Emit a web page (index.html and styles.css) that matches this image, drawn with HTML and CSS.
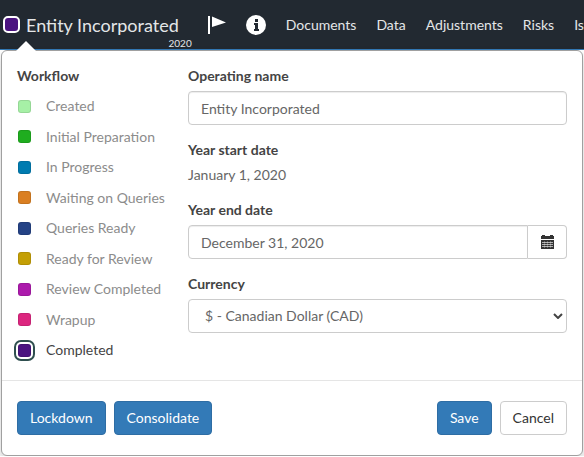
FILE: index.html
```html
<!DOCTYPE html>
<html lang="en">
<head>
<meta charset="utf-8">
<title>Entity Incorporated</title>
<link rel="stylesheet" href="styles.css">
</head>
<body>
<header class="topbar">
  <button class="entity" type="button">
    <span class="entity-swatch completed"></span>
    <span class="entity-name">Entity Incorporated</span>
    <span class="entity-year">2020</span>
  </button>
  <button class="icon-button flag" type="button" aria-label="Flag">
    <svg width="18" height="18" viewBox="0 0 18 18" fill="#fff"><path d="M0 0h2v18H0zM4 0.500L18 6.500L4 11z"/></svg>
  </button>
  <button class="icon-button info" type="button" aria-label="Information">
    <svg width="20" height="20" viewBox="0 0 20 20"><circle cx="10" cy="10" r="10" fill="#fff"/><path fill="#222931" d="M9 4h3v3H9zM8 8h4v6h1v2H8v-2h1v-4H8z"/></svg>
  </button>
  <nav class="nav">
    <a href="#">Documents</a>
    <a href="#">Data</a>
    <a href="#">Adjustments</a>
    <a href="#">Risks</a>
    <a href="#">Issues</a>
  </nav>
</header>
<form class="popover">
  <div class="popover-body">
    <section class="workflow">
      <h2 class="heading">Workflow</h2>
      <ul class="states">
        <li><button class="state" type="button"><span class="swatch created"></span>Created</button></li>
        <li><button class="state" type="button"><span class="swatch initial"></span>Initial Preparation</button></li>
        <li><button class="state" type="button"><span class="swatch progress"></span>In Progress</button></li>
        <li><button class="state" type="button"><span class="swatch waiting"></span>Waiting on Queries</button></li>
        <li><button class="state" type="button"><span class="swatch queries"></span>Queries Ready</button></li>
        <li><button class="state" type="button"><span class="swatch ready"></span>Ready for Review</button></li>
        <li><button class="state" type="button"><span class="swatch reviewed"></span>Review Completed</button></li>
        <li><button class="state" type="button"><span class="swatch wrapup"></span>Wrapup</button></li>
        <li><button class="state selected" type="button" aria-pressed="true"><span class="swatch completed"></span>Completed</button></li>
      </ul>
    </section>
    <div class="fields">
      <div class="field">
        <label class="heading" for="name">Operating name</label>
        <input class="control" id="name" type="text" value="Entity Incorporated">
      </div>
      <div class="field">
        <span class="heading">Year start date</span>
        <span class="value">January 1, 2020</span>
      </div>
      <div class="field">
        <label class="heading" for="end">Year end date</label>
        <div class="input-group">
          <input class="control" id="end" type="text" value="December 31, 2020">
          <button class="addon" type="button" aria-label="Choose date">
            <svg width="13" height="14" viewBox="0 0 13 14"><path fill="#333" d="M0 1h1V0h3v1h5V0h3v1h1v3H0zM0 5h13v9H0z"/><path stroke="#fff" stroke-opacity=".6" d="M1 7.500h11M1 9.500h11M1 11.500h11"/><path stroke="#fff" stroke-opacity=".25" d="M3.500 6v7M6.500 6v7M9.500 6v7"/></svg>
          </button>
        </div>
      </div>
      <div class="field">
        <label class="heading" for="currency">Currency</label>
        <div class="select-wrap">
          <select class="control" id="currency"><option>$ - Canadian Dollar (CAD)</option></select>
          <svg class="chevron" width="10" height="6" viewBox="0 0 10 6"><path fill="none" stroke="#444" stroke-width="2" d="M1 1l4 4l4-4"/></svg>
        </div>
      </div>
    </div>
  </div>
  <footer class="actions">
    <button class="btn primary" type="button">Lockdown</button>
    <button class="btn primary" type="button">Consolidate</button>
    <button class="btn primary save" type="submit">Save</button>
    <button class="btn" type="button">Cancel</button>
  </footer>
</form>
</body>
</html>
```
FILE: styles.css
```css
* { box-sizing: border-box; }
body {
  margin: 0;
  font: 14px/20px Lato, "Liberation Sans", sans-serif;
  color: #333;
  background: #fff;
}
button, input, select { font: inherit; color: inherit; }
button { padding: 0; border: 0; background: none; cursor: pointer; }

.topbar {
  display: flex;
  align-items: center;
  height: 50px;
  padding-left: 3px;
  background: #222931;
  border-bottom: 1px solid #337ab7;
  color: #e4e6e8;
}
.entity { position: relative; display: flex; align-items: center; gap: 6px; flex: none; }
.entity-swatch { width: 17px; height: 17px; border: 2px solid #fff; border-radius: 5px; }
.entity-name { font-size: 18px; line-height: 24px; white-space: nowrap; }
.entity-year { position: absolute; right: -13px; top: 24px; font-size: 10px; line-height: 12px; }
.icon-button { display: flex; flex: none; }
.flag { margin-left: 29px; }
.info { margin-left: 20px; }
.nav { display: flex; flex: 1; min-width: 0; overflow: hidden; gap: 20px; margin-left: 20px; }
.nav a { color: inherit; text-decoration: none; }

.popover {
  position: relative;
  margin: 0 1px;
  background: #fff;
  border: 1px solid #a0a0a0;
  border-radius: 6px;
  box-shadow: 0 5px 10px rgba(0, 0, 0, .2);
}
.popover::before {
  content: "";
  position: absolute;
  left: 14px;
  top: -10px;
  border: solid transparent;
  border-width: 0 10px 10px;
  border-bottom-color: #fff;
}
.popover-body {
  display: grid;
  grid-template-columns: 156px 1fr;
  column-gap: 15px;
  padding: 15px 15px 20px;
}
.heading { display: block; margin: 0; font-size: 14px; line-height: 20px; font-weight: 700; color: #444; }
.states {
  display: flex;
  flex-direction: column;
  justify-content: space-between;
  height: 264px;
  margin: 10px 0 0;
  padding: 0;
  list-style: none;
}
.state { display: flex; align-items: center; gap: 15px; padding-left: 1px; color: #8c8c8c; white-space: nowrap; }
.state.selected { color: #444; }
.swatch { width: 13px; height: 13px; border: 1px solid rgba(0, 0, 0, .1); border-radius: 3px; }
.selected .swatch { box-shadow: 0 0 0 2px #fff, 0 0 0 4px #2f4f4f; }
.created { background-color: #a6f0a6; }
.initial { background-color: #1fad1f; }
.progress { background-color: #007bb0; }
.waiting { background-color: #da7f22; }
.queries { background-color: #244285; }
.ready { background-color: #c49f05; }
.reviewed { background-color: #ac1aac; }
.wrapup { background-color: #dc267f; }
.completed { background-color: #4b1380; }

.fields { display: flex; flex-direction: column; gap: 15px; }
.field { display: flex; flex-direction: column; gap: 5px; }
.value { color: #666; }
.control {
  width: 100%;
  height: 34px;
  padding: 6px 12px;
  color: #666;
  background: #fff;
  border: 1px solid #ccc;
  border-radius: 4px;
  box-shadow: inset 0 1px 1px rgba(0, 0, 0, .075);
}
.input-group { display: flex; }
.input-group .control { flex: 1; border-radius: 4px 0 0 4px; }
.addon {
  display: flex;
  align-items: center;
  justify-content: center;
  width: 39px;
  border: 1px solid #ccc;
  border-left: 0;
  border-radius: 0 4px 4px 0;
}
.select-wrap { position: relative; }
select.control { display: block; appearance: none; padding-left: 16px; box-shadow: none; }
.chevron { position: absolute; right: 4px; top: 14px; pointer-events: none; }

.actions { display: flex; gap: 8px; padding: 20px 15px; border-top: 1px solid #e5e5e5; }
.btn { height: 34px; padding: 0 12px; border: 1px solid #ccc; border-radius: 4px; background: #fff; }
.primary { color: #fff; background: #337ab7; border-color: #2e6da4; }
.save { margin-left: auto; }
```
